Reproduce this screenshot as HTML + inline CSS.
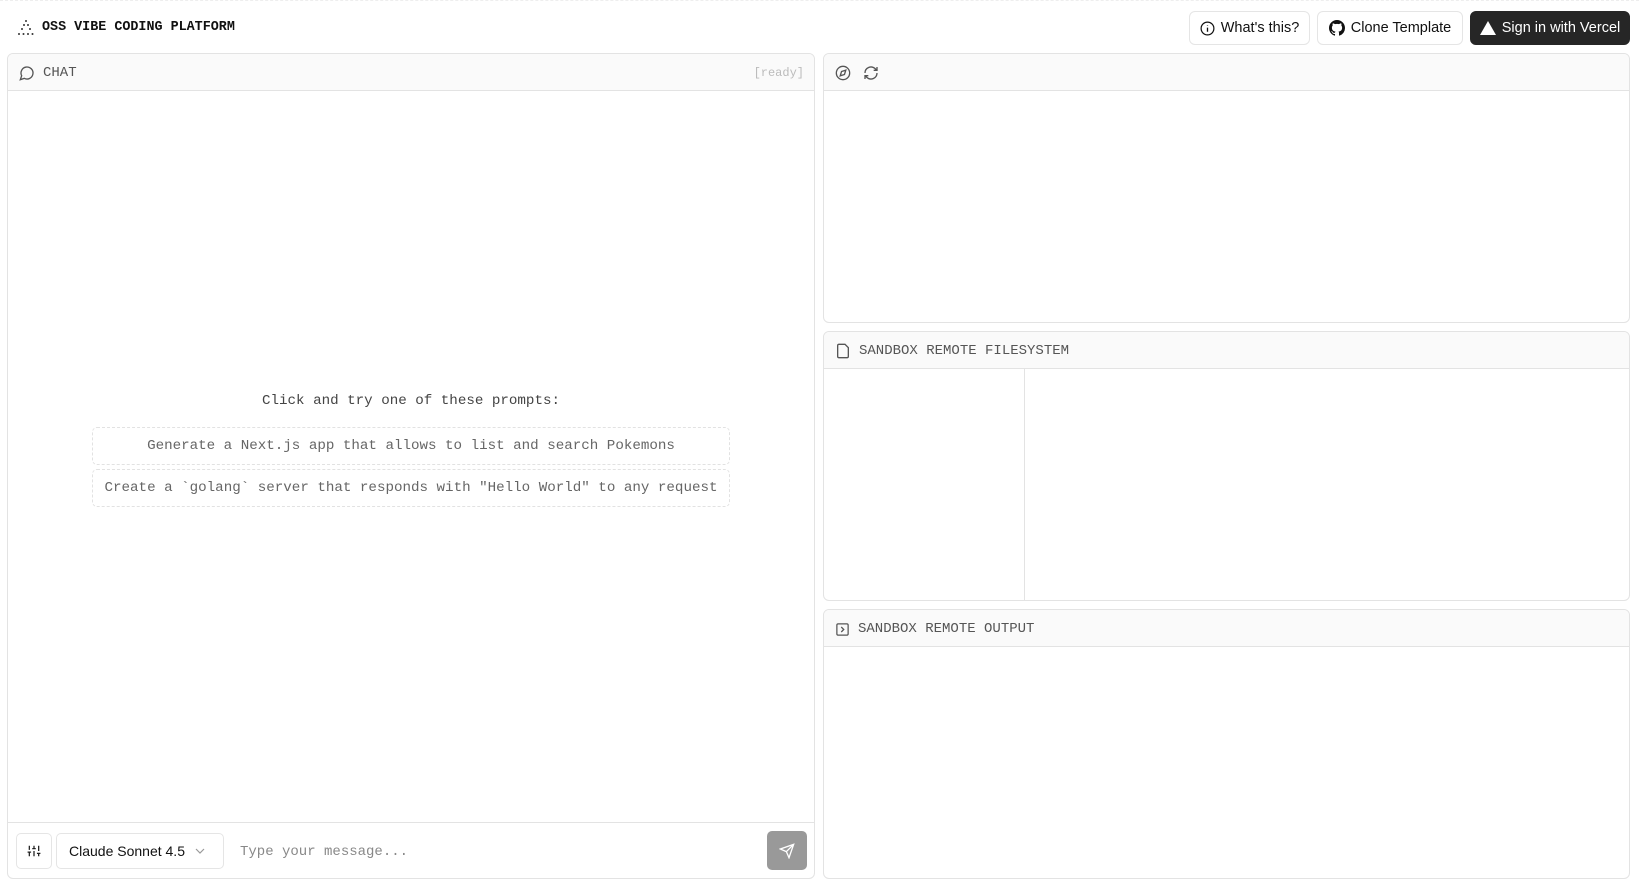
<!DOCTYPE html>
<html><head><meta charset="utf-8"><style>
*{box-sizing:border-box;margin:0;padding:0}
body{width:1639px;height:886px;background:#fff;position:relative;overflow:hidden;font-family:"Liberation Mono",monospace;color:#222}
.abs{position:absolute}
.panel{position:absolute;border:1px solid #e3e3e3;border-radius:6px;background:#fff;overflow:hidden}
.ph{position:absolute;left:0;right:0;top:0;height:37px;background:#fafafa;border-bottom:1px solid #e3e3e3;display:flex;align-items:center;padding-left:11px;padding-top:2px;font-size:14px;color:#555;gap:8px}
.btn{position:absolute;top:11px;height:34px;border:1px solid #e5e5e5;border-radius:6px;background:#fff;display:flex;align-items:center;justify-content:center;gap:6px;font-family:"Liberation Sans",sans-serif;font-size:14.5px;color:#111}
.prompt{position:absolute;left:91px;width:638px;height:38px;border:1px dashed #e2e2e2;border-radius:5px;display:flex;align-items:center;justify-content:center;font-size:14.2px;color:#666}
</style></head><body>
<div class="abs" style="left:0;right:0;top:0;height:1px;border-top:1px dashed #eee"></div>
<svg class="abs" style="left:15px;top:19px" width="22" height="18" viewBox="0 0 22 18"><g fill="#333"><circle cx="11" cy="2" r="1"/><circle cx="9" cy="6" r="1"/><circle cx="13" cy="6" r="1"/><circle cx="7" cy="10" r="1"/><circle cx="15" cy="10" r="1"/><circle cx="4" cy="15" r="1"/><circle cx="8.5" cy="15" r="1"/><circle cx="13" cy="15" r="1"/><circle cx="17.5" cy="15" r="1"/></g></svg>
<div class="abs" style="left:42px;top:20px;font-size:13.4px;font-weight:bold;color:#111">OSS VIBE CODING PLATFORM</div>

<div class="btn" style="left:1189px;width:121px"><svg width="15" height="15" viewBox="0 0 16 16"><circle cx="8" cy="8" r="6.8" fill="none" stroke="#111" stroke-width="1.3"/><path d="M8 7v4.5M8 4.5v.5" stroke="#111" stroke-width="1.4"/></svg>What's this?</div>
<div class="btn" style="left:1317px;width:146px"><svg width="16" height="16" viewBox="0 0 16 16"><path fill="#111" d="M8 0C3.58 0 0 3.58 0 8c0 3.54 2.290 6.53 5.470 7.590.4.07.55-.17.55-.38v-1.33c-2.230.48-2.700-1.07-2.700-1.07-.36-.92-.89-1.170-.89-1.170-.73-.5.05-.49.05-.49.8.06 1.230.83 1.230.83.71 1.220 1.870.87 2.330.66.07-.52.28-.87.51-1.070-1.780-.2-3.640-.89-3.640-3.950 0-.87.31-1.590.82-2.150-.08-.2-.36-1.020.08-2.120 0 0 .67-.21 2.200.82a7.6 7.6 0 0 1 4 0c1.530-1.040 2.200-.82 2.200-.82.44 1.100.16 1.920.08 2.120.51.56.82 1.270.82 2.150 0 3.070-1.870 3.750-3.650 3.950.29.25.54.73.54 1.480v2.200c0 .21.15.46.55.38A8 8 0 0 0 16 8c0-4.420-3.580-8-8-8z"/></svg>Clone Template</div>
<div class="btn" style="left:1470px;width:160px;background:#262626;border-color:#262626;color:#fff"><svg width="16" height="14" viewBox="0 0 16 14"><path d="M8 0L16 14H0z" fill="#fff"/></svg>Sign in with Vercel</div>

<div class="panel" style="left:7px;top:53px;width:808px;height:826px">
 <div class="ph"><svg width="16" height="16" viewBox="0 0 24 24" fill="none" stroke="#555" stroke-width="2"><path d="M7.9 20A9 9 0 1 0 4 16.1L2 22z"/></svg>CHAT<span style="position:absolute;right:10px;font-size:12px;color:#bbb">[ready]</span></div>
 <div class="abs" style="left:0;right:0;top:339px;text-align:center;font-size:14.2px;color:#444">Click and try one of these prompts:</div>
 <div class="prompt" style="top:373px;left:84px">Generate a Next.js app that allows to list and search Pokemons</div>
 <div class="prompt" style="top:415px;left:84px">Create a `golang` server that responds with "Hello World" to any request</div>
 <div class="abs" style="left:0;right:0;top:768px;border-top:1px solid #e3e3e3"></div>
 <div class="abs" style="left:8px;top:779px;width:36px;height:36px;border:1px solid #e5e5e5;border-radius:5px;display:flex;align-items:center;justify-content:center"><svg width="14" height="14" viewBox="0 0 24 24" fill="none" stroke="#222" stroke-width="2.2"><path d="M4 21v-7M4 10V3M12 21v-9M12 8V3M20 21v-5M20 12V3M1 14h6M9 8h6M17 16h6"/></svg></div>
 <div class="abs" style="left:48px;top:779px;width:168px;height:36px;border:1px solid #e5e5e5;border-radius:5px;display:flex;align-items:center;padding-left:12px;font-family:'Liberation Sans',sans-serif;font-size:14px;color:#111">Claude Sonnet 4.5<svg style="margin-left:10px" width="10" height="6" viewBox="0 0 10 6"><path d="M1 1l4 4 4-4" fill="none" stroke="#999" stroke-width="1.2"/></svg></div>
 <div class="abs" style="left:232px;top:790px;font-size:14px;color:#888">Type your message...</div>
 <div class="abs" style="left:759px;top:777px;width:40px;height:39px;background:#999;border-radius:5px;display:flex;align-items:center;justify-content:center"><svg width="16" height="16" viewBox="0 0 24 24" fill="none" stroke="#fff" stroke-width="2"><path d="M22 2L11 13M22 2l-7 20-4-9-9-4z"/></svg></div>
</div>

<div class="panel" style="left:823px;top:53px;width:807px;height:270px">
 <div class="ph" style="gap:12px"><svg width="16" height="16" viewBox="0 0 24 24" fill="none" stroke="#555" stroke-width="2"><circle cx="12" cy="12" r="10"/><path d="M16.2 7.8l-2 6.4-6.4 2 2-6.4z"/></svg><svg width="16" height="16" viewBox="0 0 24 24" fill="none" stroke="#555" stroke-width="2"><path d="M3 12a9 9 0 0 1 15-6.7L21 8M21 3v5h-5M21 12a9 9 0 0 1-15 6.7L3 16M8 16H3v5"/></svg></div>
</div>

<div class="panel" style="left:823px;top:331px;width:807px;height:270px">
 <div class="ph"><svg width="16" height="16" viewBox="0 0 24 24" fill="none" stroke="#555" stroke-width="2"><path d="M15 2H6a2 2 0 0 0-2 2v16a2 2 0 0 0 2 2h12a2 2 0 0 0 2-2V7z"/></svg>SANDBOX REMOTE FILESYSTEM</div>
 <div class="abs" style="left:200px;top:37px;bottom:0;border-left:1px solid #e3e3e3"></div>
</div>

<div class="panel" style="left:823px;top:609px;width:807px;height:270px">
 <div class="ph"><svg width="15" height="15" viewBox="0 0 24 24" fill="none" stroke="#555" stroke-width="2"><rect x="3" y="3" width="18" height="18" rx="2"/><path d="M10 8l4 4-4 4"/></svg>SANDBOX REMOTE OUTPUT</div>
</div>
</body></html>
